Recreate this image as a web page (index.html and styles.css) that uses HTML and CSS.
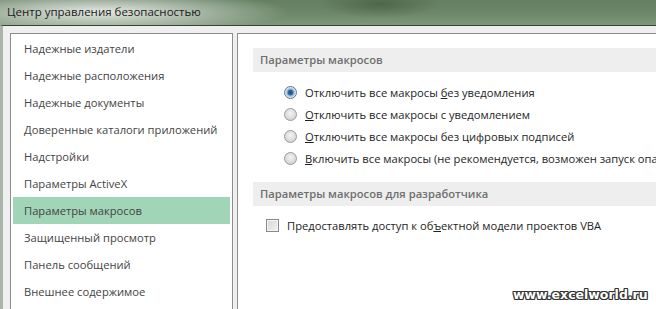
FILE: index.html
```html
<!DOCTYPE html>
<html lang="ru">
<head>
    <meta charset="UTF-8">
    <meta name="viewport" content="width=device-width, initial-scale=1.0">
    <title>Центр управления безопасностью</title>
    <link rel="stylesheet" href="styles.css">
</head>
<body>
    <div class="window">
        <div class="titlebar">Центр управления безопасностью</div>
        <div class="frame">
            <ul class="nav">
                <li>Надежные издатели</li>
                <li>Надежные расположения</li>
                <li>Надежные документы</li>
                <li>Доверенные каталоги приложений</li>
                <li>Надстройки</li>
                <li>Параметры ActiveX</li>
                <li class="active">Параметры макросов</li>
                <li>Защищенный просмотр</li>
                <li>Панель сообщений</li>
                <li>Внешнее содержимое</li>
            </ul>
            <div class="content">
                <div class="section-title">Параметры макросов</div>
                <div class="options">
                    <label class="option"><span class="radio checked"></span><span>Отключить все макросы <u>б</u>ез уведомления</span></label>
                    <label class="option"><span class="radio"></span><span><u>О</u>тключить все макросы с уведомлением</span></label>
                    <label class="option"><span class="radio"></span><span><u>О</u>тключить все макросы без цифровых подписей</span></label>
                    <label class="option"><span class="radio"></span><span><u>В</u>ключить все макросы (не рекомендуется, возможен запуск опасной программы)</span></label>
                </div>
                <div class="section-title">Параметры макросов для разработчика</div>
                <label class="check-row"><span class="checkbox"></span><span>Предоставлять доступ к об<u>ъ</u>ектной модели проектов VBA</span></label>
                <div class="watermark">www.excelworld.ru</div>
            </div>
        </div>
    </div>
</body>
</html>
```

FILE: styles.css
```css
body {
    margin: 0;
    font-family: "Open Sans", "Noto Sans", sans-serif;
    font-size: 11.2px;
    color: #1e1e1e;
    background: #f0f0f0;
    overflow: hidden;
}
.window {
    width: 656px;
    height: 309px;
    display: flex;
    flex-direction: column;
}
.titlebar {
    height: 25px;
    line-height: 24px;
    padding-left: 7px;
    font-size: 11.5px;
    color: #1a1a1a;
    background:
        radial-gradient(ellipse 190px 22px at 100px 12px, rgba(236, 238, 235, 0.95), rgba(236, 238, 235, 0) 100%),
        radial-gradient(ellipse 60px 14px at 380px 4px, rgba(60, 85, 58, 0.6), rgba(60, 85, 58, 0) 100%),
        linear-gradient(to bottom, #647f62 0%, #6d876a 55%, #7f977c 100%);
    flex-shrink: 0;
}
.frame {
    flex: 1;
    display: flex;
    gap: 4px;
    border-top: 1px solid #34462f;
    border-left: 3px solid #a9b5a7;
    background: #eeefee;
    padding: 7px 0 0 7px;
    min-height: 0;
}
.nav {
    list-style: none;
    margin: 0;
    padding: 1px 2px 0;
    width: 217px;
    flex-shrink: 0;
    background: #fff;
    border: 1px solid #8d8d8d;
    border-bottom: none;
}
.nav li {
    height: 27px;
    line-height: 28px;
    padding-left: 11px;
    color: #444;
    white-space: nowrap;
}
.nav li.active {
    background: #a0d5b8;
}
.content {
    flex: 1;
    position: relative;
    background: #fff;
    border: 1px solid #8d8d8d;
    border-right: none;
    border-bottom: none;
    padding: 14px 0 0 15px;
    overflow: hidden;
}
.section-title {
    height: 24px;
    line-height: 23px;
    padding-left: 7px;
    background: #eeeeee;
    color: #6e6e6e;
    font-weight: 600;
    white-space: nowrap;
}
.options {
    padding: 9px 0 13px 31px;
}
.option {
    display: flex;
    align-items: center;
    height: 22px;
    white-space: nowrap;
}
.radio {
    width: 11px;
    height: 11px;
    border: 1px solid #9a9a9a;
    border-radius: 50%;
    margin-right: 8px;
    flex-shrink: 0;
    background: radial-gradient(circle at 50% 40%, #f4f4f4 0%, #dadada 60%, #c8c8c8 100%);
}
.radio.checked {
    border-color: #5b7893;
    background: radial-gradient(circle at 50% 50%, #1d4f7f 0%, #2f6da3 32%, #8fb3d1 42%, #e6eef5 70%, #c9d6e2 100%);
}
.check-row {
    display: flex;
    align-items: center;
    height: 24px;
    margin-top: 7px;
    padding-left: 13px;
    white-space: nowrap;
}
.checkbox {
    width: 11px;
    height: 11px;
    border: 1px solid #8a8a8a;
    margin-right: 8px;
    flex-shrink: 0;
    background: linear-gradient(135deg, #d6d6d6, #f2f2f2);
    box-shadow: inset 0 0 0 1px #f4f4f4;
}
.watermark {
    position: absolute;
    left: 275px;
    top: 253px;
    font-family: "DejaVu Sans", sans-serif;
    font-weight: bold;
    font-size: 12.5px;
    color: #fff;
    text-shadow:
        1px 0 0 #333, -1px 0 0 #333, 0 1px 0 #333, 0 -1px 0 #333,
        1px 1px 0 #333, -1px -1px 0 #333, 1px -1px 0 #333, -1px 1px 0 #333;
}
```
